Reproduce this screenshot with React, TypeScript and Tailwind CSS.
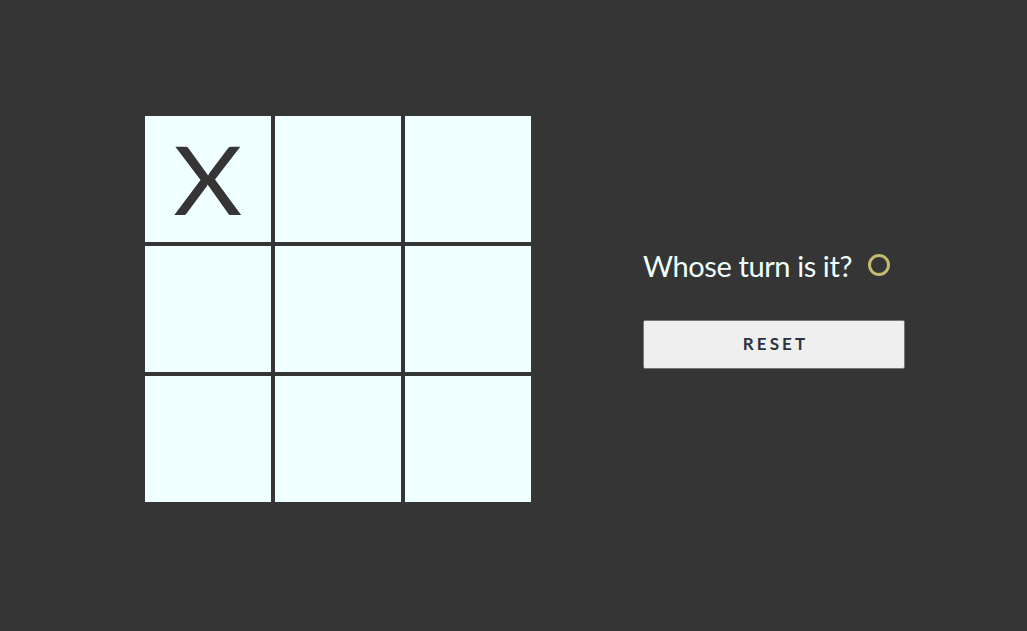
import { useState } from 'react'

type Mark = 'X' | 'O' | null

export default function App() {
  const [cells, setCells] = useState<Mark[]>(['X', null, null, null, null, null, null, null, null])
  const turn = cells.filter(Boolean).length % 2 === 0 ? 'X' : 'O'

  const play = (i: number) => {
    if (cells[i]) return
    setCells(c => c.map((v, j) => (j === i ? turn : v)))
  }

  return (
    <div className="w-[1027px] h-[631px] bg-[#353535] flex items-start pt-[116px] pl-[145px] font-['Lato',sans-serif]">
      {/* Board */}
      <div className="grid grid-cols-[repeat(3,126px)] grid-rows-[repeat(3,126px)] gap-[4px]">
        {cells.map((v, i) => (
          <button key={i} onClick={() => play(i)}
            className="bg-[#f0ffff] flex items-center justify-center text-[#353535] text-[95px] leading-none font-normal pb-[2px]">
            <span className="inline-block scale-x-[1.12]">{v}</span>
          </button>
        ))}
      </div>

      {/* Side panel */}
      <div className="ml-[112px] mt-[134px] flex flex-col">
        <div className="flex items-center h-[30px] text-[#f0ffff] text-[29px] leading-none tracking-[-0.4px]">
          Whose turn is it?
          <span className="ml-[16px] w-[22px] h-[22px] rounded-full border-[3.5px] border-[#c3bb70]" />
        </div>
        <button onClick={() => setCells([null, null, null, null, null, null, null, null, null])}
          className="mt-[40px] w-[262px] h-[49px] bg-[#efefef] border border-[#767676] rounded-[2px] text-[#2a3340] text-[17px] leading-none font-bold tracking-[0.18em] pl-[0.18em] pb-[2px]">
          RESET
        </button>
      </div>
    </div>
  )
}
